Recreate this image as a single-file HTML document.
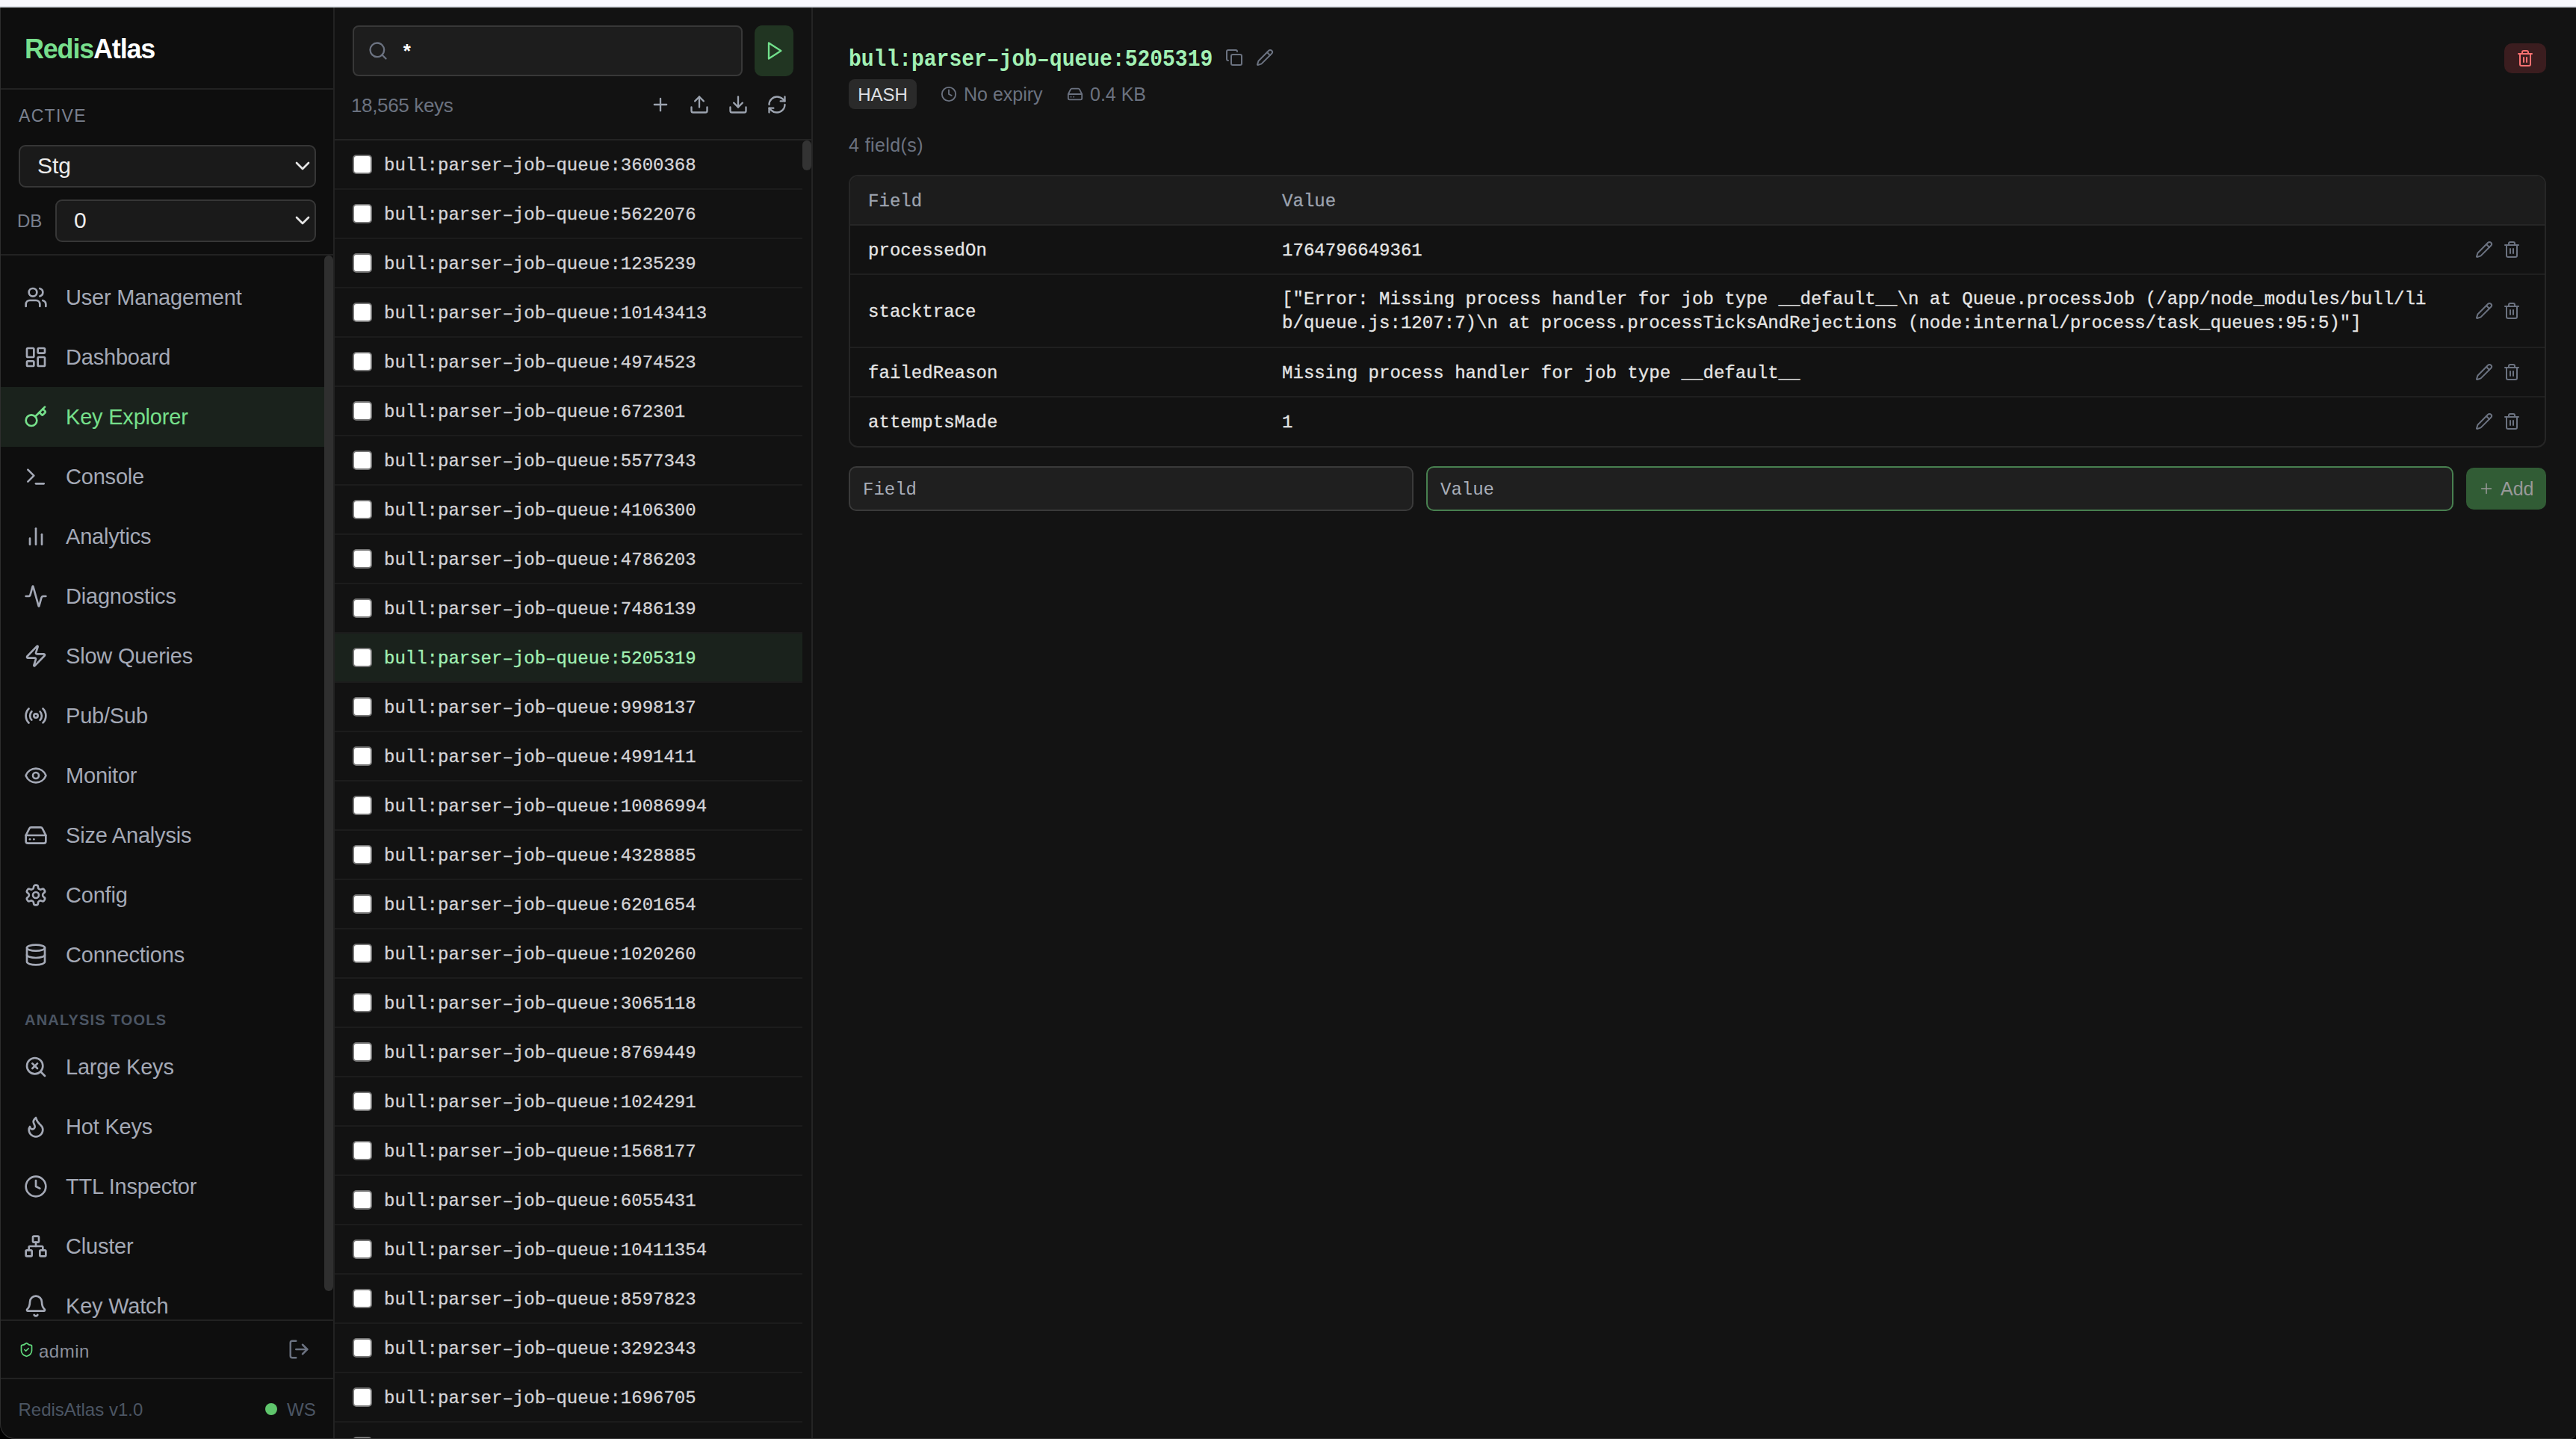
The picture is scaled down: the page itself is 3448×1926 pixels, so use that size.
<!DOCTYPE html>
<html><head><meta charset="utf-8">
<style>
*{box-sizing:border-box;margin:0;padding:0}
html,body{width:3448px;height:1926px;overflow:hidden;background:#000}
body{font-family:"Liberation Sans",sans-serif;position:relative}
.topbar{position:absolute;left:0;top:0;width:3448px;height:8px;background:#f8f8fd}
.topline{position:absolute;left:0;top:8px;width:3448px;height:1px;background:#dde0e8}
.topline2{position:absolute;left:0;top:9px;width:3448px;height:1px;background:#eceff5}
.app{position:absolute;left:0;top:10px;width:3448px;height:1916px;background:#121212;border-radius:0 0 8px 20px;overflow:hidden}
.appb{position:absolute;left:0;top:10px;width:3448px;height:1916px;border-left:1px solid #2e2e2e;border-bottom:1px solid #333;border-radius:0 0 8px 20px;pointer-events:none}
.mono-s{-webkit-text-stroke:0.3px currentColor}
svg.i{fill:none;stroke:currentColor;stroke-width:2;stroke-linecap:round;stroke-linejoin:round;display:block}
/* sidebar */
.sb{position:absolute;left:0;top:0;width:448px;height:1916px;background:#0e0e0e;border-right:2px solid #222;border-left:1px solid #0e0e0e}
.sb-head{position:absolute;left:0;top:0;width:445px;height:110px;border-bottom:2px solid #222}
.logo{position:absolute;left:32px;top:32px;font-weight:bold;font-size:36px;line-height:48px;color:#fff;letter-spacing:-1.2px}
.logo span{color:#78de8c}
.active-lbl{position:absolute;left:24px;top:127px;font-size:23px;line-height:36px;color:#7a808e;letter-spacing:1.3px}
.sel{position:absolute;background:#1a1a1a;border:2px solid #363636;border-radius:9px;color:#ececec;font-size:30px}
.sel .t{position:absolute;top:0px;line-height:52px}
.sel svg{position:absolute;right:0px;top:10px;color:#e5e5e5}
.db-lbl{position:absolute;left:22px;top:268px;font-size:24px;line-height:36px;color:#7a808e}
.sb-sep{position:absolute;left:0;top:330px;width:445px;height:2px;background:#222}
.nav{position:absolute;left:0;top:332px;width:445px;height:1424px;overflow:hidden}
.item{position:absolute;left:0;width:433px;height:80px;color:#a4a9b6;font-size:29px}
.item svg{position:absolute;left:31px;top:24px}
.item .t{position:absolute;left:87px;top:0;line-height:80px;white-space:nowrap;letter-spacing:-0.2px}
.item.act{background:#1a221c;color:#76e08b}
.sec{position:absolute;left:32px;font-size:20px;font-weight:bold;color:#4b5563;letter-spacing:1.2px;line-height:30px}
.sb-thumb{position:absolute;left:433px;top:332px;width:12px;height:1386px;background:#2f2f2f;border-radius:6px}
.foot1{position:absolute;left:0;top:1756px;width:445px;height:2px;background:#222}
.foot2{position:absolute;left:0;top:1834px;width:445px;height:2px;background:#222}
.admin{position:absolute;left:51px;top:1786px;font-size:24px;line-height:26px;color:#8a8f9b;letter-spacing:0.5px}
.ver{position:absolute;left:23.5px;top:1864.5px;font-size:24px;line-height:24px;color:#4b5563}
.dot{position:absolute;left:354px;top:1868px;width:16px;height:16px;border-radius:8px;background:#5fc56c}
.ws{position:absolute;left:383px;top:1865px;font-size:24px;line-height:24px;color:#4b5563}
/* key panel */
.kp{position:absolute;left:448px;top:0;width:640px;height:1916px;background:#121212;border-right:2px solid #242424}
.search{position:absolute;left:24px;top:24px;width:522px;height:68px;background:#1d1d1d;border:2px solid #383838;border-radius:8px}
.search svg{position:absolute;left:18px;top:18px;color:#6b7280}
.search .t{position:absolute;left:63px;top:19.5px;font-family:"Liberation Mono",monospace;font-weight:bold;font-size:26px;line-height:30px;color:#fff}
.play{position:absolute;left:562px;top:24px;width:52px;height:68px;background:#213522;border-radius:10px}
.play svg{position:absolute;left:12px;top:20px;color:#72e08c}
.kcount{position:absolute;left:22px;top:116px;font-size:26px;line-height:30px;color:#6b7280;letter-spacing:-0.35px}
.kicons svg{position:absolute;color:#9ca3af}
.khead-b{position:absolute;left:0;top:176px;width:638px;height:2px;background:#242424}
.klist{position:absolute;left:0;top:178px;width:626px;height:1738px;overflow:hidden}
.row{position:absolute;left:0;width:626px;height:66px;border-bottom:2px solid #1c1c1c}
.row.sel2{background:#1a221c}
.cb{position:absolute;left:24px;top:19px;width:26px;height:26px;background:#fff;border:2px solid #767676;border-radius:5px}
.row .t{-webkit-text-stroke:0.3px currentColor;position:absolute;left:66px;top:2px;line-height:64px;font-family:"Liberation Mono",monospace;font-size:24px;color:#d4d4d8;white-space:nowrap}
.row.sel2 .t{color:#a2f0b4}
.kthumb{position:absolute;left:626px;top:178px;width:12px;height:40px;background:#333;border-radius:6px}
/* main */
.mp{position:absolute;left:1088px;top:0;width:2360px;height:1916px;background:#131313}
.title{position:absolute;left:48px;top:53.5px;font-family:"Liberation Mono",monospace;font-weight:bold;font-size:28px;line-height:34px;color:#a2f0b4;white-space:nowrap;transform:scaleY(1.1);transform-origin:0 27px}
.ticons svg{position:absolute;color:#6b7280}
.delbtn{position:absolute;left:2264px;top:48px;width:56px;height:40px;background:#3b1d1f;border-radius:10px}
.delbtn svg{position:absolute;left:16px;top:8px;color:#f87171}
.badge{position:absolute;left:48px;top:96px;width:91px;height:40px;background:#2a2a2a;border-radius:8px;color:#dfe0e5;font-size:24px;line-height:42px;text-align:center}
.meta{position:absolute;top:101px;font-size:25px;line-height:30px;color:#6b7280;white-space:nowrap}
.meta svg{position:absolute;color:#6b7280}
.fcount{position:absolute;left:48px;top:169px;font-size:25px;line-height:30px;color:#6b7280;letter-spacing:0.4px}
.tbl{position:absolute;left:48px;top:224px;width:2272px;height:365px;border:2px solid #262626;border-radius:12px;overflow:hidden;background:#121212}
.thead{position:absolute;left:0;top:0;width:100%;height:66px;background:#1c1c1c;border-bottom:2px solid #262626}
.tc{-webkit-text-stroke:0.3px currentColor;position:absolute;font-family:"Liberation Mono",monospace;font-size:24px;color:#e5e5e5;white-space:pre;line-height:32px;letter-spacing:0.045px}
.thead .tc{color:#9ca3af}
.tr{position:absolute;left:0;width:100%;border-bottom:2px solid #1f1f1f}
.tr svg{position:absolute;color:#6b7280}
.inp{position:absolute;top:614px;height:60px;background:#1f1f1f;border:2px solid #3a3a3a;border-radius:10px;font-family:"Liberation Mono",monospace;font-size:24px;line-height:59px;color:#a9aeb9;padding-left:17px}
.addbtn{position:absolute;left:2213px;top:616px;width:107px;height:56px;background:#315c35;border-radius:10px;color:#999;font-size:25px;line-height:56px}
</style></head><body>
<div class="topbar"></div><div class="topline"></div><div class="topline2"></div>
<div class="app">
 <div class="sb">
  <div class="sb-head"><div class="logo"><span>Redis</span>Atlas</div></div>
  <div class="active-lbl">ACTIVE</div>
  <div class="sel" style="left:24px;top:184px;width:398px;height:57px"><div class="t" style="left:23px">Stg</div>
   <svg class="i" width="32" height="32" viewBox="0 0 24 24" style="stroke-width:2"><path d="m6 9 6 6 6-6"/></svg></div>
  <div class="db-lbl">DB</div>
  <div class="sel" style="left:73px;top:257px;width:349px;height:57px"><div class="t" style="left:23px">0</div>
   <svg class="i" width="32" height="32" viewBox="0 0 24 24"><path d="m6 9 6 6 6-6"/></svg></div>
  <div class="sb-sep"></div>
  <div class="nav">
   <div class="item" style="top:16px"><svg class="i" width="32" height="32" viewBox="0 0 24 24"><path d="M16 21v-2a4 4 0 0 0-4-4H6a4 4 0 0 0-4 4v2"/><circle cx="9" cy="7" r="4"/><path d="M22 21v-2a4 4 0 0 0-3-3.87"/><path d="M16 3.13a4 4 0 0 1 0 7.75"/></svg><div class="t">User Management</div></div>
   <div class="item" style="top:96px"><svg class="i" width="32" height="32" viewBox="0 0 24 24"><rect width="7" height="9" x="3" y="3" rx="1"/><rect width="7" height="5" x="14" y="3" rx="1"/><rect width="7" height="9" x="14" y="12" rx="1"/><rect width="7" height="5" x="3" y="16" rx="1"/></svg><div class="t">Dashboard</div></div>
   <div class="item act" style="top:176px"><svg class="i" width="32" height="32" viewBox="0 0 24 24"><path d="m15.5 7.5 2.3 2.3a1 1 0 0 0 1.4 0l2.1-2.1a1 1 0 0 0 0-1.4L19 4"/><path d="m21 2-9.6 9.6"/><circle cx="7.5" cy="15.5" r="5.5"/></svg><div class="t">Key Explorer</div></div>
   <div class="item" style="top:256px"><svg class="i" width="32" height="32" viewBox="0 0 24 24"><polyline points="4 17 10 11 4 5"/><line x1="12" x2="20" y1="19" y2="19"/></svg><div class="t">Console</div></div>
   <div class="item" style="top:336px"><svg class="i" width="32" height="32" viewBox="0 0 24 24"><line x1="18" x2="18" y1="20" y2="10"/><line x1="12" x2="12" y1="20" y2="4"/><line x1="6" x2="6" y1="20" y2="14"/></svg><div class="t">Analytics</div></div>
   <div class="item" style="top:416px"><svg class="i" width="32" height="32" viewBox="0 0 24 24"><path d="M22 12h-2.48a2 2 0 0 0-1.93 1.46l-2.35 8.36a.25.25 0 0 1-.48 0L9.24 2.18a.25.25 0 0 0-.48 0l-2.35 8.36A2 2 0 0 1 4.49 12H2"/></svg><div class="t">Diagnostics</div></div>
   <div class="item" style="top:496px"><svg class="i" width="32" height="32" viewBox="0 0 24 24"><path d="M4 14a1 1 0 0 1-.78-1.63l9.9-10.2a.5.5 0 0 1 .86.46l-1.92 6.02A1 1 0 0 0 13 10h7a1 1 0 0 1 .78 1.63l-9.9 10.2a.5.5 0 0 1-.86-.46l1.92-6.02A1 1 0 0 0 11 14z"/></svg><div class="t">Slow Queries</div></div>
   <div class="item" style="top:576px"><svg class="i" width="32" height="32" viewBox="0 0 24 24"><path d="M4.9 19.1C1 15.2 1 8.8 4.9 4.9"/><path d="M7.8 16.2c-2.3-2.3-2.3-6.1 0-8.5"/><circle cx="12" cy="12" r="2"/><path d="M16.2 7.8c2.3 2.3 2.3 6.1 0 8.5"/><path d="M19.1 4.9C23 8.8 23 15.1 19.1 19"/></svg><div class="t">Pub/Sub</div></div>
   <div class="item" style="top:656px"><svg class="i" width="32" height="32" viewBox="0 0 24 24"><path d="M2.062 12.348a1 1 0 0 1 0-.696 10.75 10.75 0 0 1 19.876 0 1 1 0 0 1 0 .696 10.75 10.75 0 0 1-19.876 0"/><circle cx="12" cy="12" r="3"/></svg><div class="t">Monitor</div></div>
   <div class="item" style="top:736px"><svg class="i" width="32" height="32" viewBox="0 0 24 24"><line x1="22" x2="2" y1="12" y2="12"/><path d="M5.45 5.11 2 12v6a2 2 0 0 0 2 2h16a2 2 0 0 0 2-2v-6l-3.45-6.89A2 2 0 0 0 16.76 4H7.24a2 2 0 0 0-1.79 1.11z"/><line x1="6" x2="6.01" y1="16" y2="16"/><line x1="10" x2="10.01" y1="16" y2="16"/></svg><div class="t">Size Analysis</div></div>
   <div class="item" style="top:816px"><svg class="i" width="32" height="32" viewBox="0 0 24 24"><path d="M12.22 2h-.44a2 2 0 0 0-2 2v.18a2 2 0 0 1-1 1.73l-.43.25a2 2 0 0 1-2 0l-.15-.08a2 2 0 0 0-2.73.73l-.22.38a2 2 0 0 0 .73 2.73l.15.1a2 2 0 0 1 1 1.72v.51a2 2 0 0 1-1 1.74l-.15.09a2 2 0 0 0-.73 2.73l.22.38a2 2 0 0 0 2.73.73l.15-.08a2 2 0 0 1 2 0l.43.25a2 2 0 0 1 1 1.73V20a2 2 0 0 0 2 2h.44a2 2 0 0 0 2-2v-.18a2 2 0 0 1 1-1.73l.43-.25a2 2 0 0 1 2 0l.15.08a2 2 0 0 0 2.73-.73l.22-.39a2 2 0 0 0-.73-2.73l-.15-.08a2 2 0 0 1-1-1.74v-.5a2 2 0 0 1 1-1.74l.15-.09a2 2 0 0 0 .73-2.73l-.22-.38a2 2 0 0 0-2.73-.73l-.15.08a2 2 0 0 1-2 0l-.43-.25a2 2 0 0 1-1-1.73V4a2 2 0 0 0-2-2z"/><circle cx="12" cy="12" r="3"/></svg><div class="t">Config</div></div>
   <div class="item" style="top:896px"><svg class="i" width="32" height="32" viewBox="0 0 24 24"><ellipse cx="12" cy="5" rx="9" ry="3"/><path d="M3 5V19A9 3 0 0 0 21 19V5"/><path d="M3 12A9 3 0 0 0 21 12"/></svg><div class="t">Connections</div></div>
   <div class="sec" style="top:1008px">ANALYSIS TOOLS</div>
   <div class="item" style="top:1046px"><svg class="i" width="32" height="32" viewBox="0 0 24 24"><path d="m13.5 8.5-5 5"/><path d="m8.5 8.5 5 5"/><circle cx="11" cy="11" r="8"/><path d="m21 21-4.3-4.3"/></svg><div class="t">Large Keys</div></div>
   <div class="item" style="top:1126px"><svg class="i" width="32" height="32" viewBox="0 0 24 24"><path d="M12 3q1 4 4 6.5t3 5.5a1 1 0 0 1-14 0 5 5 0 0 1 1-3 1 1 0 0 0 5 0c0-2-1.5-3-1.5-5q0-2 2.5-4"/></svg><div class="t">Hot Keys</div></div>
   <div class="item" style="top:1206px"><svg class="i" width="32" height="32" viewBox="0 0 24 24"><circle cx="12" cy="12" r="10"/><polyline points="12 6 12 12 16 14"/></svg><div class="t">TTL Inspector</div></div>
   <div class="item" style="top:1286px"><svg class="i" width="32" height="32" viewBox="0 0 24 24"><rect x="16" y="16" width="6" height="6" rx="1"/><rect x="2" y="16" width="6" height="6" rx="1"/><rect x="9" y="2" width="6" height="6" rx="1"/><path d="M5 16v-3a1 1 0 0 1 1-1h12a1 1 0 0 1 1 1v3"/><path d="M12 12V8"/></svg><div class="t">Cluster</div></div>
   <div class="item" style="top:1366px"><svg class="i" width="32" height="32" viewBox="0 0 24 24"><path d="M10.268 21a2 2 0 0 0 3.464 0"/><path d="M3.262 15.326A1 1 0 0 0 4 17h16a1 1 0 0 0 .74-1.673C19.41 13.956 18 12.499 18 8A6 6 0 0 0 6 8c0 4.499-1.411 5.956-2.738 7.326"/></svg><div class="t">Key Watch</div></div>
  </div>
  <div class="sb-thumb"></div>
  <div class="foot1"></div>
  <svg class="i" width="21" height="21" viewBox="0 0 24 24" style="position:absolute;left:23.5px;top:1786px;color:#5fd47a"><path d="M20 13c0 5-3.5 7.5-7.66 8.95a1 1 0 0 1-.67-.01C7.5 20.5 4 18 4 13V6a1 1 0 0 1 1-1c2 0 4.5-1.2 6.24-2.72a1.17 1.17 0 0 1 1.52 0C14.51 3.81 17 5 19 5a1 1 0 0 1 1 1z"/><path d="m9 12 2 2 4-4"/></svg>
  <div class="admin">admin</div>
  <svg class="i" width="30" height="30" viewBox="0 0 24 24" style="position:absolute;left:384px;top:1781px;color:#6b7280"><path d="m16 17 5-5-5-5"/><path d="M21 12H9"/><path d="M9 21H5a2 2 0 0 1-2-2V5a2 2 0 0 1 2-2h4"/></svg>
  <div class="foot2"></div>
  <div class="ver">RedisAtlas v1.0</div>
  <div class="dot"></div>
  <div class="ws">WS</div>
 </div>
<div class="kp">
  <div class="search"><svg class="i" width="28" height="28" viewBox="0 0 24 24"><circle cx="11" cy="11" r="8"/><path d="m21 21-4.3-4.3"/></svg><div class="t">*</div></div>
  <div class="play"><svg class="i" width="28" height="28" viewBox="0 0 24 24"><polygon points="6 3 20 12 6 21 6 3"/></svg></div>
  <div class="kcount">18,565 keys</div>
  <div class="kicons">
   <svg class="i" width="28" height="28" viewBox="0 0 24 24" style="left:422px;top:116px"><path d="M5 12h14"/><path d="M12 5v14"/></svg>
   <svg class="i" width="28" height="28" viewBox="0 0 24 24" style="left:474px;top:116px"><path d="M21 15v4a2 2 0 0 1-2 2H5a2 2 0 0 1-2-2v-4"/><polyline points="17 8 12 3 7 8"/><line x1="12" x2="12" y1="3" y2="15"/></svg>
   <svg class="i" width="28" height="28" viewBox="0 0 24 24" style="left:526px;top:116px"><path d="M21 15v4a2 2 0 0 1-2 2H5a2 2 0 0 1-2-2v-4"/><polyline points="7 10 12 15 17 10"/><line x1="12" x2="12" y1="15" y2="3"/></svg>
   <svg class="i" width="28" height="28" viewBox="0 0 24 24" style="left:578px;top:116px"><path d="M3 12a9 9 0 0 1 9-9 9.75 9.75 0 0 1 6.74 2.74L21 8"/><path d="M21 3v5h-5"/><path d="M21 12a9 9 0 0 1-9 9 9.75 9.75 0 0 1-6.74-2.74L3 16"/><path d="M8 16H3v5"/></svg>
  </div>
  <div class="khead-b"></div>
  <div class="klist">
   <div class="row" style="top:0px"><div class="cb"></div><div class="t">bull:parser&#8211;job&#8211;queue:3600368</div></div>
   <div class="row" style="top:66px"><div class="cb"></div><div class="t">bull:parser&#8211;job&#8211;queue:5622076</div></div>
   <div class="row" style="top:132px"><div class="cb"></div><div class="t">bull:parser&#8211;job&#8211;queue:1235239</div></div>
   <div class="row" style="top:198px"><div class="cb"></div><div class="t">bull:parser&#8211;job&#8211;queue:10143413</div></div>
   <div class="row" style="top:264px"><div class="cb"></div><div class="t">bull:parser&#8211;job&#8211;queue:4974523</div></div>
   <div class="row" style="top:330px"><div class="cb"></div><div class="t">bull:parser&#8211;job&#8211;queue:672301</div></div>
   <div class="row" style="top:396px"><div class="cb"></div><div class="t">bull:parser&#8211;job&#8211;queue:5577343</div></div>
   <div class="row" style="top:462px"><div class="cb"></div><div class="t">bull:parser&#8211;job&#8211;queue:4106300</div></div>
   <div class="row" style="top:528px"><div class="cb"></div><div class="t">bull:parser&#8211;job&#8211;queue:4786203</div></div>
   <div class="row" style="top:594px"><div class="cb"></div><div class="t">bull:parser&#8211;job&#8211;queue:7486139</div></div>
   <div class="row sel2" style="top:660px"><div class="cb"></div><div class="t">bull:parser&#8211;job&#8211;queue:5205319</div></div>
   <div class="row" style="top:726px"><div class="cb"></div><div class="t">bull:parser&#8211;job&#8211;queue:9998137</div></div>
   <div class="row" style="top:792px"><div class="cb"></div><div class="t">bull:parser&#8211;job&#8211;queue:4991411</div></div>
   <div class="row" style="top:858px"><div class="cb"></div><div class="t">bull:parser&#8211;job&#8211;queue:10086994</div></div>
   <div class="row" style="top:924px"><div class="cb"></div><div class="t">bull:parser&#8211;job&#8211;queue:4328885</div></div>
   <div class="row" style="top:990px"><div class="cb"></div><div class="t">bull:parser&#8211;job&#8211;queue:6201654</div></div>
   <div class="row" style="top:1056px"><div class="cb"></div><div class="t">bull:parser&#8211;job&#8211;queue:1020260</div></div>
   <div class="row" style="top:1122px"><div class="cb"></div><div class="t">bull:parser&#8211;job&#8211;queue:3065118</div></div>
   <div class="row" style="top:1188px"><div class="cb"></div><div class="t">bull:parser&#8211;job&#8211;queue:8769449</div></div>
   <div class="row" style="top:1254px"><div class="cb"></div><div class="t">bull:parser&#8211;job&#8211;queue:1024291</div></div>
   <div class="row" style="top:1320px"><div class="cb"></div><div class="t">bull:parser&#8211;job&#8211;queue:1568177</div></div>
   <div class="row" style="top:1386px"><div class="cb"></div><div class="t">bull:parser&#8211;job&#8211;queue:6055431</div></div>
   <div class="row" style="top:1452px"><div class="cb"></div><div class="t">bull:parser&#8211;job&#8211;queue:10411354</div></div>
   <div class="row" style="top:1518px"><div class="cb"></div><div class="t">bull:parser&#8211;job&#8211;queue:8597823</div></div>
   <div class="row" style="top:1584px"><div class="cb"></div><div class="t">bull:parser&#8211;job&#8211;queue:3292343</div></div>
   <div class="row" style="top:1650px"><div class="cb"></div><div class="t">bull:parser&#8211;job&#8211;queue:1696705</div></div>
   <div class="row" style="top:1716px"><div class="cb"></div><div class="t">bull:parser&#8211;job&#8211;queue:2211348</div></div>
  </div>
  <div class="kthumb"></div>
 </div>
<div class="mp">
  <div class="title">bull:parser&#8211;job&#8211;queue:5205319</div>
  <div class="ticons">
   <svg class="i" width="24" height="24" viewBox="0 0 24 24" style="left:552px;top:55px"><rect width="14" height="14" x="8" y="8" rx="2" ry="2"/><path d="M4 16c-1.1 0-2-.9-2-2V4c0-1.1.9-2 2-2h10c1.1 0 2 .9 2 2"/></svg>
   <svg class="i" width="24" height="24" viewBox="0 0 24 24" style="left:593px;top:55px"><path d="M21.174 6.812a1 1 0 0 0-3.986-3.987L3.842 16.174a2 2 0 0 0-.5.83l-1.321 4.352a.5.5 0 0 0 .623.622l4.353-1.32a2 2 0 0 0 .83-.497z"/><path d="m15 5 4 4"/></svg>
  </div>
  <div class="delbtn"><svg class="i" width="24" height="24" viewBox="0 0 24 24"><path d="M3 6h18"/><path d="M19 6v14c0 1-1 2-2 2H7c-1 0-2-1-2-2V6"/><path d="M8 6V4c0-1 1-2 2-2h4c1 0 2 1 2 2v2"/><line x1="10" x2="10" y1="11" y2="17"/><line x1="14" x2="14" y1="11" y2="17"/></svg></div>
  <div class="badge">HASH</div>
  <svg class="i" width="22" height="22" viewBox="0 0 24 24" style="position:absolute;left:171px;top:105px;color:#6b7280"><circle cx="12" cy="12" r="10"/><polyline points="12 6 12 12 16 14"/></svg>
  <div class="meta" style="left:202px">No expiry</div>
  <svg class="i" width="22" height="22" viewBox="0 0 24 24" style="position:absolute;left:340px;top:105px;color:#6b7280"><line x1="22" x2="2" y1="12" y2="12"/><path d="M5.45 5.11 2 12v6a2 2 0 0 0 2 2h16a2 2 0 0 0 2-2v-6l-3.45-6.89A2 2 0 0 0 16.76 4H7.24a2 2 0 0 0-1.79 1.11z"/><line x1="6" x2="6.01" y1="16" y2="16"/><line x1="10" x2="10.01" y1="16" y2="16"/></svg>
  <div class="meta" style="left:371px">0.4 KB</div>
  <div class="fcount">4 field(s)</div>
  <div class="tbl">
   <div class="thead"><div class="tc" style="left:24px;top:18px">Field</div><div class="tc" style="left:578px;top:18px">Value</div></div>
   <div class="tr" style="top:66px;height:66px"><div class="tc" style="left:24px;top:18px">processedOn</div><div class="tc" style="left:578px;top:18px">1764796649361</div><svg class="i" width="24" height="24" viewBox="0 0 24 24" style="left:2175px;top:20px"><path d="M21.174 6.812a1 1 0 0 0-3.986-3.987L3.842 16.174a2 2 0 0 0-.5.83l-1.321 4.352a.5.5 0 0 0 .623.622l4.353-1.32a2 2 0 0 0 .83-.497z"/><path d="m15 5 4 4"/></svg><svg class="i" width="24" height="24" viewBox="0 0 24 24" style="left:2212px;top:20px"><path d="M3 6h18"/><path d="M19 6v14c0 1-1 2-2 2H7c-1 0-2-1-2-2V6"/><path d="M8 6V4c0-1 1-2 2-2h4c1 0 2 1 2 2v2"/><line x1="10" x2="10" y1="11" y2="17"/><line x1="14" x2="14" y1="11" y2="17"/></svg></div>
   <div class="tr" style="top:132px;height:98px"><div class="tc" style="left:24px;top:34px">stacktrace</div><div class="tc" style="left:578px;top:17px">["Error: Missing process handler for job type __default__\n at Queue.processJob (/app/node_modules/bull/li
b/queue.js:1207:7)\n at process.processTicksAndRejections (node:internal/process/task_queues:95:5)"]</div><svg class="i" width="24" height="24" viewBox="0 0 24 24" style="left:2175px;top:36px"><path d="M21.174 6.812a1 1 0 0 0-3.986-3.987L3.842 16.174a2 2 0 0 0-.5.83l-1.321 4.352a.5.5 0 0 0 .623.622l4.353-1.32a2 2 0 0 0 .83-.497z"/><path d="m15 5 4 4"/></svg><svg class="i" width="24" height="24" viewBox="0 0 24 24" style="left:2212px;top:36px"><path d="M3 6h18"/><path d="M19 6v14c0 1-1 2-2 2H7c-1 0-2-1-2-2V6"/><path d="M8 6V4c0-1 1-2 2-2h4c1 0 2 1 2 2v2"/><line x1="10" x2="10" y1="11" y2="17"/><line x1="14" x2="14" y1="11" y2="17"/></svg></div>
   <div class="tr" style="top:230px;height:66px"><div class="tc" style="left:24px;top:18px">failedReason</div><div class="tc" style="left:578px;top:18px">Missing process handler for job type __default__</div><svg class="i" width="24" height="24" viewBox="0 0 24 24" style="left:2175px;top:20px"><path d="M21.174 6.812a1 1 0 0 0-3.986-3.987L3.842 16.174a2 2 0 0 0-.5.83l-1.321 4.352a.5.5 0 0 0 .623.622l4.353-1.32a2 2 0 0 0 .83-.497z"/><path d="m15 5 4 4"/></svg><svg class="i" width="24" height="24" viewBox="0 0 24 24" style="left:2212px;top:20px"><path d="M3 6h18"/><path d="M19 6v14c0 1-1 2-2 2H7c-1 0-2-1-2-2V6"/><path d="M8 6V4c0-1 1-2 2-2h4c1 0 2 1 2 2v2"/><line x1="10" x2="10" y1="11" y2="17"/><line x1="14" x2="14" y1="11" y2="17"/></svg></div>
   <div class="tr" style="top:296px;height:65px;border-bottom:none"><div class="tc" style="left:24px;top:18px">attemptsMade</div><div class="tc" style="left:578px;top:18px">1</div><svg class="i" width="24" height="24" viewBox="0 0 24 24" style="left:2175px;top:20px"><path d="M21.174 6.812a1 1 0 0 0-3.986-3.987L3.842 16.174a2 2 0 0 0-.5.83l-1.321 4.352a.5.5 0 0 0 .623.622l4.353-1.32a2 2 0 0 0 .83-.497z"/><path d="m15 5 4 4"/></svg><svg class="i" width="24" height="24" viewBox="0 0 24 24" style="left:2212px;top:20px"><path d="M3 6h18"/><path d="M19 6v14c0 1-1 2-2 2H7c-1 0-2-1-2-2V6"/><path d="M8 6V4c0-1 1-2 2-2h4c1 0 2 1 2 2v2"/><line x1="10" x2="10" y1="11" y2="17"/><line x1="14" x2="14" y1="11" y2="17"/></svg></div>
  </div>
  <div class="inp" style="left:48px;width:756px">Field</div>
  <div class="inp" style="left:821px;width:1375px;border-color:#488050">Value</div>
  <div class="addbtn"><svg class="i" width="22" height="22" viewBox="0 0 24 24" style="position:absolute;left:16px;top:17px;stroke-width:1.7"><path d="M5 12h14"/><path d="M12 5v14"/></svg><span style="position:absolute;left:46px;top:0">Add</span></div>
 </div>
</div>
<div class="appb"></div>
</body></html>
